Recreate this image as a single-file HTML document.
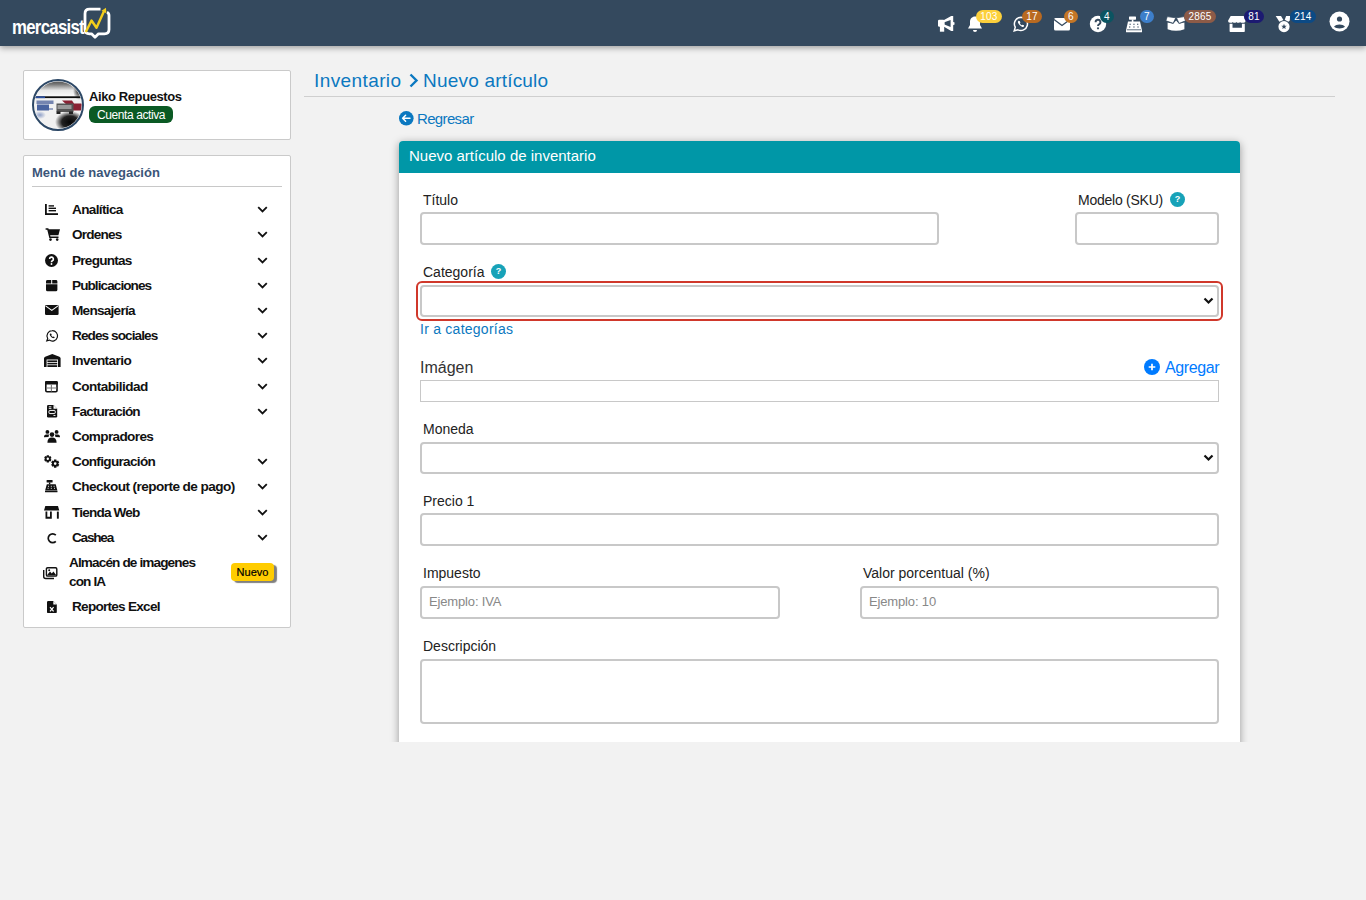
<!DOCTYPE html>
<html><head><meta charset="utf-8">
<style>
*{box-sizing:border-box;margin:0;padding:0}
html,body{width:1366px;height:900px;overflow:hidden;background:#f2f2f2;font-family:"Liberation Sans",sans-serif;color:#212529}
.abs{position:absolute}
#nav{position:absolute;left:0;top:0;width:1366px;height:46px;background:#34495e;box-shadow:0 2px 6px rgba(0,0,0,.35);z-index:5}
.logo-t{position:absolute;left:11px;top:13px;color:#fff;font-weight:bold;font-size:21px;letter-spacing:-1px;line-height:24px}
.nbadge{position:absolute;top:10px;height:13px;border-radius:7px;color:#fff;font-size:10px;line-height:14px;text-align:center;padding:0;letter-spacing:0.2px}
.card{position:absolute;background:#fff;border:1px solid #cacaca;border-radius:2px}
.mi{position:absolute;left:72px;font-weight:bold;font-size:13.6px;line-height:19px;color:#111}
.mic{position:absolute;left:44px;width:15px;height:15px}
.chev{position:absolute;left:257px;width:11px;height:7px}
.lbl{position:absolute;font-size:14px;line-height:16px;color:#222}
.inp{position:absolute;border:2px solid #c8c8c8;border-radius:4px;background:#fff}
.q{position:absolute;width:14px;height:14px;border-radius:50%;background:#17a2b8;color:#fff;font-size:9px;font-weight:bold;line-height:14px;text-align:center}
.ph{position:absolute;left:7px;top:6px;font-size:13px;color:#888;letter-spacing:-0.15px}
</style></head><body>
<div id="nav">
  <div class="logo-t" style="left:12px;top:14px;font-size:21px;line-height:26px;letter-spacing:-0.9px;transform:scaleX(0.8);transform-origin:0 0">mercasist</div>
  <svg class="abs" style="left:80px;top:4px" width="34" height="38" viewBox="80 4 34 38">
    <path d="M100.5 9.2 H89.5 Q85 9.2 85 13.7 V29.5 Q85 33.8 89.5 33.8 H91.5 L95 37.2 L98.5 33.8 H104.5 Q109 33.8 109 29.5 V15.5 Q109 13 107 12.2" fill="none" stroke="#fff" stroke-width="2.8" stroke-linejoin="round"/>
    <path d="M85.8 32 L91.5 20.5 L96.5 27.8 L104.3 10.5" fill="none" stroke="#f3cd1c" stroke-width="2.4" stroke-linejoin="round"/>
    <path d="M101.5 10.8 L106 7.8 L106.3 13.2 Z" fill="#f3cd1c"/>
  </svg>

<svg class="abs" style="left:934px;top:12px" width="24" height="24" viewBox="0 0 24 24"><rect x="4" y="7.7" width="6.4" height="7" rx="1.3" fill="#fff"/><rect x="5.9" y="13" width="4.3" height="6.7" fill="#fff"/><path fill-rule="evenodd" d="M10 7.9 L17.2 4 H19.2 V18.9 H17.2 L10 14.8z M10.4 10.3 L16.6 7.9 V15 L10.4 12.6z" fill="#fff"/><rect x="18.8" y="10" width="1.7" height="3" rx=".8" fill="#fff"/></svg>
<svg class="abs" style="left:967px;top:15px" width="16" height="18" viewBox="0 0 16 18"><path d="M8 1.5c-3 0-5 2.3-5 5.2v3.3L1 13.5h14L13 10V6.7c0-2.9-2-5.2-5-5.2z" fill="#fff"/><path d="M6 15h4a2 2 0 0 1-4 0z" fill="#fff"/></svg>
<div class="nbadge" style="left:976px;width:26px;background:#fcd03c">103</div>
<svg class="abs" style="left:1013px;top:16px" width="16" height="16" viewBox="0 0 16 16"><path d="M8 1.3a6.6 6.6 0 0 0-5.7 9.9L1.2 14.8l3.7-1A6.6 6.6 0 1 0 8 1.3z" stroke="#fff" stroke-width="1.5" fill="none"/><path d="M5.5 4.8c-.5.4-.9 1.3-.2 2.5.8 1.5 2.1 2.8 3.6 3.4 1.1.4 1.8.1 2.2-.4l-.2-1-1.4-.6-.6.6c-.9-.3-1.7-1.2-2.1-2l.6-.6-.5-1.4z" fill="#fff"/></svg>
<div class="nbadge" style="left:1022px;width:20px;background:#b96a21">17</div>
<svg class="abs" style="left:1053px;top:17px" width="18" height="14" viewBox="0 0 18 14"><rect x="1" y="1" width="16" height="12.5" rx="1.5" fill="#fff"/><path d="M1 2.5l8 6 8-6" stroke="#34495e" stroke-width="1.3" fill="none"/></svg>
<div class="nbadge" style="left:1064px;width:14px;padding:0;background:#c47626">6</div>
<svg class="abs" style="left:1089px;top:15px" width="18" height="18" viewBox="0 0 18 18"><circle cx="9" cy="9" r="8.2" fill="#fff"/><path d="M6.6 7.2a2.4 2.4 0 1 1 3.5 2.1c-.8.4-1.1.8-1.1 1.6" stroke="#34495e" stroke-width="1.9" fill="none"/><circle cx="9" cy="13.3" r="1.1" fill="#34495e"/></svg>
<div class="nbadge" style="left:1100px;width:14px;padding:0;background:#0b5461">4</div>
<svg class="abs" style="left:1125px;top:15px" width="18" height="18" viewBox="0 0 18 18"><rect x="4" y="1.5" width="7" height="3.2" rx=".6" fill="#fff"/><rect x="6.8" y="4.5" width="1.6" height="2.5" fill="#fff"/><path d="M3 6.5h12l2 9H1z" fill="#fff"/><rect x="1" y="15" width="16" height="2.3" rx=".5" fill="#fff"/><path d="M4.5 9.2h1.3M8.3 9.2h1.3M12 9.2h1.3M4 12h1.3M8.3 12h1.3M12.4 12h1.3" stroke="#34495e" stroke-width="1.1"/><path d="M2 14.8h14" stroke="#34495e" stroke-width=".8"/></svg>
<div class="nbadge" style="left:1140px;width:14px;padding:0;background:#3d7fcb">7</div>
<svg class="abs" style="left:1162px;top:12px" width="28" height="24" viewBox="0 0 28 24"><path d="M5.6 10.6 L11.2 11.7 L14.1 8.6 L17 11.7 L22.4 10.6 V17.2 Q14 20.4 5.6 17.2z" fill="#fff"/><path d="M5.3 4.6 L13.8 5.8 L11.2 11.3 L3.8 8.8z" fill="#fff" stroke="#34495e" stroke-width=".8" stroke-linejoin="round"/><path d="M14.4 5.8 L22.3 4.6 L23.6 8.8 L17.1 11.4z" fill="#fff" stroke="#34495e" stroke-width=".8" stroke-linejoin="round"/></svg>
<div class="nbadge" style="left:1184px;width:32px;background:#8d5b47">2865</div>
<svg class="abs" style="left:1224px;top:12px" width="24" height="24" viewBox="0 0 24 24"><path d="M6.7 3.9H19.7L21.6 8.7Q21.6 10.7 19.6 10.7H6Q4 10.7 4 8.7z" fill="#fff"/><circle cx="8.7" cy="10.9" r=".7" fill="#34495e"/><circle cx="12.4" cy="10.9" r=".7" fill="#34495e"/><circle cx="16.1" cy="10.9" r=".7" fill="#34495e"/><path fill-rule="evenodd" d="M5.6 11.7H20.8V19.2Q20.8 20 20 20H6.4Q5.6 20 5.6 19.2zM8.5 11.7H17.9V15.7H8.5z" fill="#fff"/></svg>
<div class="nbadge" style="left:1244px;width:20px;background:#1c1a71">81</div>
<svg class="abs" style="left:1272px;top:10px" width="24" height="24" viewBox="0 0 24 24"><path d="M3.7 6.1H9L11.4 10L7.4 11.8z" fill="#fff"/><path d="M14.1 6.1H18.1L17.8 10.4L16.4 11.8L12.7 9.7z" fill="#fff"/><path fill-rule="evenodd" d="M17.6 16.6a5.6 5.6 0 1 1-11.2 0a5.6 5.6 0 1 1 11.2 0zM12.00 13.80 L12.73 15.69 L14.76 15.80 L13.19 17.09 L13.70 19.05 L12.00 17.95 L10.30 19.05 L10.81 17.09 L9.24 15.80 L11.27 15.69z" fill="#fff"/></svg>
<div class="nbadge" style="left:1290px;width:26px;background:#0c4a85">214</div>
<svg class="abs" style="left:1329px;top:11px" width="21" height="21" viewBox="0 0 21 21"><circle cx="10.5" cy="10.5" r="10" fill="#fff"/><circle cx="10.5" cy="8" r="2.6" fill="#34495e"/><path d="M5 15.8c1.2-1.6 3.2-2.4 5.5-2.4s4.3.8 5.5 2.4c-1.4 1.1-3.4 1.6-5.5 1.6s-4.1-.5-5.5-1.6z" fill="#34495e"/></svg>

</div>

<!-- profile card -->
<div class="card" style="left:23px;top:70px;width:268px;height:70px"></div>
<svg class="abs" style="left:32px;top:79px" width="52" height="52" viewBox="0 0 52 52">
 <defs>
  <clipPath id="avc"><circle cx="26" cy="26" r="23.6"/></clipPath>
  <linearGradient id="avt" x1="0" y1="0" x2="0" y2="1"><stop offset="0" stop-color="#3a3a3a"/><stop offset=".3" stop-color="#777"/><stop offset=".65" stop-color="#e8e8e8"/><stop offset="1" stop-color="#fafafa"/></linearGradient>
  <radialGradient id="avb" cx=".5" cy=".5" r=".5"><stop offset="0" stop-color="#050505"/><stop offset=".55" stop-color="#222"/><stop offset="1" stop-color="#222" stop-opacity="0"/></radialGradient>
  <radialGradient id="avr" cx=".5" cy=".5" r=".5"><stop offset="0" stop-color="#111"/><stop offset="1" stop-color="#111" stop-opacity="0"/></radialGradient>
  <radialGradient id="avbl" cx=".5" cy=".5" r=".5"><stop offset="0" stop-color="#8fa0c8"/><stop offset="1" stop-color="#8fa0c8" stop-opacity="0"/></radialGradient>
 </defs>
 <circle cx="26" cy="26" r="25.8" fill="#fff"/>
 <g clip-path="url(#avc)">
  <rect x="0" y="0" width="52" height="52" fill="#f1f1f1"/>
  <rect x="0" y="0" width="52" height="17.5" fill="url(#avt)"/>
  <ellipse cx="47" cy="12" rx="6" ry="9" fill="url(#avr)"/>
  <rect x="0" y="17.3" width="52" height="1.8" fill="#0d0d0d"/>
  <rect x="3" y="17.3" width="10" height="1.8" fill="#2b4f9e"/>
  <rect x="4.5" y="21.5" width="17" height="3.5" fill="#7585b0"/>
  <rect x="5" y="25.5" width="12" height="6" fill="#4a64a0"/>
  <rect x="17" y="29" width="4" height="2" fill="#9aa6c4"/>
  <path d="M30 21.5h10l2 3h8v7h-9z" fill="#8a2233"/>
  <path d="M24.5 24.5h17v8.5h-17z" fill="#555"/>
  <path d="M25.5 26h14v4h-14z" fill="#999"/>
  <rect x="24.5" y="32.5" width="4" height="2.5" fill="#222"/>
  <rect x="37" y="32.5" width="4" height="2.5" fill="#222"/>
  <ellipse cx="38" cy="43" rx="15" ry="11" fill="url(#avb)"/>
  <ellipse cx="8" cy="36" rx="6" ry="4" fill="url(#avbl)"/>
 </g>
 <circle cx="26" cy="26" r="25" fill="none" stroke="#2d4866" stroke-width="2"/>
</svg>
<div class="abs" style="left:89px;top:89px;font-weight:bold;font-size:13px;line-height:15px;color:#111;letter-spacing:-0.4px">Aiko Repuestos</div>
<div class="abs" style="left:89px;top:106px;width:84px;height:17px;border-radius:6px;background:#0b5a24;color:#fff;font-size:12px;line-height:18px;text-align:center;letter-spacing:-0.4px">Cuenta activa</div>

<!-- menu card -->
<div class="card" style="left:23px;top:155px;width:268px;height:473px"></div>
<div class="abs" style="left:32px;top:165px;font-weight:bold;font-size:13px;line-height:16px;color:#3b5578">Menú de navegación</div>
<div class="abs" style="left:32px;top:186px;width:250px;height:1px;background:#c8c8c8"></div>

<div class="mi" style="top:199.5px;letter-spacing:-0.66px">Analítica</div>
<svg class="chev" style="top:205.5px" width="11" height="7" viewBox="0 0 11 7"><path d="M1.2 1.2 5.5 5.5 9.8 1.2" stroke="#111" stroke-width="1.8" fill="none"/></svg>
<div class="mi" style="top:224.5px;letter-spacing:-0.82px">Ordenes</div>
<svg class="chev" style="top:230.5px" width="11" height="7" viewBox="0 0 11 7"><path d="M1.2 1.2 5.5 5.5 9.8 1.2" stroke="#111" stroke-width="1.8" fill="none"/></svg>
<div class="mi" style="top:250.5px;letter-spacing:-0.76px">Preguntas</div>
<svg class="chev" style="top:256.5px" width="11" height="7" viewBox="0 0 11 7"><path d="M1.2 1.2 5.5 5.5 9.8 1.2" stroke="#111" stroke-width="1.8" fill="none"/></svg>
<div class="mi" style="top:275.5px;letter-spacing:-0.94px">Publicaciones</div>
<svg class="chev" style="top:281.5px" width="11" height="7" viewBox="0 0 11 7"><path d="M1.2 1.2 5.5 5.5 9.8 1.2" stroke="#111" stroke-width="1.8" fill="none"/></svg>
<div class="mi" style="top:300.5px;letter-spacing:-0.75px">Mensajería</div>
<svg class="chev" style="top:306.5px" width="11" height="7" viewBox="0 0 11 7"><path d="M1.2 1.2 5.5 5.5 9.8 1.2" stroke="#111" stroke-width="1.8" fill="none"/></svg>
<div class="mi" style="top:325.5px;letter-spacing:-0.92px">Redes sociales</div>
<svg class="chev" style="top:331.5px" width="11" height="7" viewBox="0 0 11 7"><path d="M1.2 1.2 5.5 5.5 9.8 1.2" stroke="#111" stroke-width="1.8" fill="none"/></svg>
<div class="mi" style="top:350.5px;letter-spacing:-0.58px">Inventario</div>
<svg class="chev" style="top:356.5px" width="11" height="7" viewBox="0 0 11 7"><path d="M1.2 1.2 5.5 5.5 9.8 1.2" stroke="#111" stroke-width="1.8" fill="none"/></svg>
<div class="mi" style="top:376.5px;letter-spacing:-0.54px">Contabilidad</div>
<svg class="chev" style="top:382.5px" width="11" height="7" viewBox="0 0 11 7"><path d="M1.2 1.2 5.5 5.5 9.8 1.2" stroke="#111" stroke-width="1.8" fill="none"/></svg>
<div class="mi" style="top:401.5px;letter-spacing:-0.84px">Facturación</div>
<svg class="chev" style="top:407.5px" width="11" height="7" viewBox="0 0 11 7"><path d="M1.2 1.2 5.5 5.5 9.8 1.2" stroke="#111" stroke-width="1.8" fill="none"/></svg>
<div class="mi" style="top:426.5px;letter-spacing:-0.65px">Compradores</div>
<div class="mi" style="top:451.5px;letter-spacing:-0.69px">Configuración</div>
<svg class="chev" style="top:457.5px" width="11" height="7" viewBox="0 0 11 7"><path d="M1.2 1.2 5.5 5.5 9.8 1.2" stroke="#111" stroke-width="1.8" fill="none"/></svg>
<div class="mi" style="top:476.5px;letter-spacing:-0.57px">Checkout (reporte de pago)</div>
<svg class="chev" style="top:482.5px" width="11" height="7" viewBox="0 0 11 7"><path d="M1.2 1.2 5.5 5.5 9.8 1.2" stroke="#111" stroke-width="1.8" fill="none"/></svg>
<div class="mi" style="top:502.5px;letter-spacing:-0.82px">Tienda Web</div>
<svg class="chev" style="top:508.5px" width="11" height="7" viewBox="0 0 11 7"><path d="M1.2 1.2 5.5 5.5 9.8 1.2" stroke="#111" stroke-width="1.8" fill="none"/></svg>
<div class="mi" style="top:527.5px;letter-spacing:-1.22px">Cashea</div>
<svg class="chev" style="top:533.5px" width="11" height="7" viewBox="0 0 11 7"><path d="M1.2 1.2 5.5 5.5 9.8 1.2" stroke="#111" stroke-width="1.8" fill="none"/></svg>
<div class="mi" style="top:596.5px;letter-spacing:-0.75px">Reportes Excel</div>
<div class="mi" style="left:69px;top:552.5px;letter-spacing:-0.88px">Almacén de imagenes<br>con IA</div>
<div class="abs" style="left:231px;top:563px;width:43px;height:18px;border-radius:4px;background:#ffcc00;box-shadow:3px 2px 1px rgba(0,0,0,.5);color:#000;font-size:11px;line-height:18px;text-align:center;-webkit-text-stroke:0.2px #000">Nuevo</div>

<svg class="abs" style="left:45px;top:204px;overflow:visible" width="13" height="11" viewBox="0 0 13 11"><rect x="0" y="0" width="1.8" height="11" fill="#111"/><rect x="0" y="9.2" width="13" height="1.8" fill="#111"/><rect x="3.6" y="1.2" width="5.4" height="1.4" fill="#111"/><rect x="3.6" y="3.6" width="7.4" height="1.4" fill="#111"/><rect x="3.6" y="6" width="7.4" height="1.4" fill="#111"/></svg>
<svg class="abs" style="left:44.5px;top:228px;overflow:visible" width="15" height="13" viewBox="0 0 15 13"><path d="M0.6 0.9h2.2l2.1 8.3h8.6" stroke="#111" stroke-width="1.5" fill="none"/><path d="M3 1.2h12l-1.6 6H4.5z" fill="#111"/><circle cx="5.5" cy="11.6" r="1.3" fill="#111"/><circle cx="12.2" cy="11.6" r="1.3" fill="#111"/></svg>
<svg class="abs" style="left:45px;top:254px;overflow:visible" width="13" height="13" viewBox="0 0 13 13"><circle cx="6.5" cy="6.5" r="6.5" fill="#111"/><path d="M4.6 5a1.9 1.9 0 1 1 2.8 1.7c-.7.3-.9.7-.9 1.3v.3" stroke="#fff" stroke-width="1.6" fill="none"/><circle cx="6.5" cy="10" r=".95" fill="#fff"/></svg>
<svg class="abs" style="left:45.8px;top:279.8px;overflow:visible" width="11.4" height="11.2" viewBox="0 0 11.4 11.2"><path d="M1.5 0h3.7v3.4H0v-1.9Q0 0 1.5 0zM6.2 0h3.7Q11.4 0 11.4 1.5v1.9H6.2z" fill="#111"/><path d="M0 4.3h11.4v5.4q0 1.5-1.5 1.5H1.5Q0 11.2 0 9.7z" fill="#111"/></svg>
<svg class="abs" style="left:44.5px;top:305px;overflow:visible" width="13.6" height="10" viewBox="0 0 13.6 10"><rect x="0" y="0" width="13.6" height="10" rx="1.2" fill="#111"/><path d="M0.6 0.9 6.8 5.4 13 0.9" stroke="#fff" stroke-width="1.1" fill="none"/></svg>
<svg class="abs" style="left:45.5px;top:329.8px;overflow:visible" width="12" height="11.4" viewBox="0 0 12 11.4"><path d="M6.2 0.7a5.2 5.2 0 0 0-4.5 7.8L0.8 10.8l2.5-.7A5.2 5.2 0 1 0 6.2 0.7z" stroke="#111" stroke-width="1.2" fill="none"/><path d="M4.2 3.4c-.4.3-.7 1-.1 2 .6 1.1 1.6 2.1 2.8 2.6.8.3 1.4.1 1.7-.3l-.1-.8-1.1-.5-.5.5c-.7-.3-1.3-.9-1.7-1.6l.5-.5-.4-1.1z" fill="#111"/></svg>
<svg class="abs" style="left:43.7px;top:354px;overflow:visible" width="16.6" height="13" viewBox="0 0 16.6 13"><path d="M0 4.3Q0 3.2 1.2 2.7L8.3 0l7.1 2.7q1.2.5 1.2 1.6V13h-2.6V5.6H2.6V13H0z" fill="#111"/><rect x="3.4" y="6.4" width="9.8" height="1.6" fill="#111"/><rect x="3.4" y="8.8" width="9.8" height="1.6" fill="#111"/><rect x="3.4" y="11.2" width="9.8" height="1.8" fill="#111"/></svg>
<svg class="abs" style="left:44.8px;top:380.5px;overflow:visible" width="12.8" height="11.5" viewBox="0 0 12.8 11.5"><rect x="0.8" y="0.8" width="11.2" height="9.9" rx="1.2" fill="none" stroke="#111" stroke-width="1.6"/><rect x="0" y="0" width="12.8" height="3.6" rx="1.2" fill="#111"/><path d="M1 7h10.8M6.4 3.6v7" stroke="#777" stroke-width="1.1"/></svg>
<svg class="abs" style="left:46.9px;top:404.8px;overflow:visible" width="10.2" height="12.5" viewBox="0 0 10.2 12.5"><path d="M0 1.2Q0 0 1.2 0h5.3l3.7 3.7v7.6q0 1.2-1.2 1.2H1.2Q0 12.5 0 11.3z" fill="#111"/><path d="M6.5 0v3.7h3.7z" fill="#fff"/><path d="M1.8 1.8h2.6M1.8 3.4h2.6M6.5 10.5h2" stroke="#fff" stroke-width=".9"/><rect x="2" y="5.4" width="6.2" height="3.2" rx=".8" fill="none" stroke="#fff" stroke-width="1"/></svg>
<svg class="abs" style="left:44.1px;top:429.9px;overflow:visible" width="16" height="12.8" viewBox="0 0 16 12.8"><circle cx="3.4" cy="1.9" r="1.9" fill="#111"/><circle cx="12.6" cy="1.9" r="1.9" fill="#111"/><circle cx="8" cy="4.6" r="2.3" fill="#111"/><path d="M0 7.2Q0 4.6 2.3 4.6h2.2q.4 0 .7.2-.6.8-.6 2.3z" fill="#111"/><path d="M16 7.2Q16 4.6 13.7 4.6h-2.2q-.4 0-.7.2.6.8.6 2.3z" fill="#111"/><path d="M3.4 12.8q0-5.2 4.6-5.2t4.6 5.2z" fill="#111"/></svg>
<svg class="abs" style="left:44.1px;top:454.9px;overflow:visible" width="15.6" height="12.8" viewBox="0 0 15.6 12.8"><path fill-rule="evenodd" d="M2.72 0.16 L4.88 0.16 L4.98 1.15 L5.50 1.45 L6.42 1.04 L7.50 2.91 L6.68 3.50 L6.68 4.10 L7.50 4.69 L6.42 6.56 L5.50 6.15 L4.98 6.45 L4.88 7.44 L2.72 7.44 L2.62 6.45 L2.10 6.15 L1.18 6.56 L0.10 4.69 L0.92 4.10 L0.92 3.50 L0.10 2.91 L1.18 1.04 L2.10 1.45 L2.62 1.15ZM5.00 3.80a1.2 1.2 0 1 0 -2.40 0a1.2 1.2 0 1 0 2.40 0z" fill="#111"/><path fill-rule="evenodd" d="M10.01 4.57 L12.39 4.57 L12.50 5.68 L13.08 6.01 L14.09 5.55 L15.28 7.62 L14.38 8.27 L14.38 8.93 L15.28 9.58 L14.09 11.65 L13.08 11.19 L12.50 11.52 L12.39 12.63 L10.01 12.63 L9.90 11.52 L9.32 11.19 L8.31 11.65 L7.12 9.58 L8.02 8.93 L8.02 8.27 L7.12 7.62 L8.31 5.55 L9.32 6.01 L9.90 5.68ZM12.55 8.60a1.35 1.35 0 1 0 -2.70 0a1.35 1.35 0 1 0 2.70 0z" fill="#111"/></svg>
<svg class="abs" style="left:45.1px;top:479.5px;overflow:visible" width="12.5" height="12.2" viewBox="0 0 12.5 12.2"><rect x="1.6" y="0" width="6" height="2.6" rx=".6" fill="#111"/><rect x="3.9" y="2.4" width="1.4" height="2" fill="#111"/><path d="M1.8 4.3h8.9l1.6 6H0.2z" fill="#111"/><rect x="0" y="10.6" width="12.5" height="1.6" rx=".5" fill="#111"/><path d="M3 6.3h1M5.8 6.3h1M8.6 6.3h1M2.6 8.3h1M5.8 8.3h1M9 8.3h1" stroke="#fff" stroke-width=".9"/></svg>
<svg class="abs" style="left:44px;top:506px;overflow:visible" width="15.3" height="12.7" viewBox="0 0 15.3 12.7"><path d="M1.3 0h12.7l1.3 4.6H0z" fill="#111"/><path d="M1.5 5.6v7.1h6.3V5.6H6v5.1H3.3V5.6z" fill="#111"/><rect x="12.9" y="5.6" width="1.9" height="7.1" fill="#111"/></svg>
<svg class="abs" style="left:46.5px;top:532.5px;overflow:visible" width="10" height="10.5" viewBox="0 0 10 10.5"><path d="M8.8 2.2A4.4 4.4 0 1 0 8.8 8.3" stroke="#111" stroke-width="1.7" fill="none"/></svg>
<svg class="abs" style="left:43px;top:566.5px;overflow:visible" width="14.5" height="11.7" viewBox="0 0 14.5 11.7"><rect x="3.4" y="0.7" width="10.4" height="8.4" rx="1.2" fill="none" stroke="#111" stroke-width="1.4"/><path d="M3.8 8.6l3.2-4 1.8 1.8 1.6-2 3.1 4.2z" fill="#111"/><circle cx="6.2" cy="3.2" r="1" fill="#111"/><path d="M0.7 3v6.5q0 2 2 2h8.3" stroke="#111" stroke-width="1.4" fill="none"/></svg>
<svg class="abs" style="left:47px;top:600.6px;overflow:visible" width="9.8" height="12.1" viewBox="0 0 9.8 12.1"><path d="M0 1.2Q0 0 1.2 0h5.1l3.5 3.5v7.4q0 1.2-1.2 1.2H1.2Q0 12.1 0 10.9z" fill="#111"/><path d="M6.3 0v3.5h3.5z" fill="#fff"/><path d="M3 6.2l3.6 4.2M6.6 6.2 3 10.4" stroke="#fff" stroke-width="1.2"/></svg>

<!-- breadcrumb -->
<div class="abs" style="left:314px;top:70px;font-size:19px;color:#0b78c0;line-height:22px;letter-spacing:0.4px">Inventario</div>
<svg class="abs" style="left:408px;top:73px" width="11" height="15" viewBox="0 0 11 15"><path d="M2.5 1.5 8.5 7.5 2.5 13.5" stroke="#0b78c0" stroke-width="2.4" fill="none"/></svg>
<div class="abs" style="left:423px;top:70px;font-size:19px;color:#0b78c0;line-height:22px;letter-spacing:0.2px">Nuevo artículo</div>
<div class="abs" style="left:304px;top:96px;width:1031px;height:1px;background:#cfcfcf"></div>
<svg class="abs" style="left:399px;top:111.2px" width="14.6" height="14.6" viewBox="0 0 14.6 14.6"><circle cx="7.3" cy="7.3" r="7.3" fill="#0b78c0"/><path d="M11 7.3H3.6M6.6 4.3 3.6 7.3 6.6 10.3" stroke="#fff" stroke-width="1.5" fill="none" stroke-linecap="round" stroke-linejoin="round"/></svg>
<div class="abs" style="left:417px;top:110px;font-size:15px;color:#0b78c0;line-height:17px;letter-spacing:-0.65px">Regresar</div>

<!-- main card -->
<div class="abs" style="left:370px;top:120px;width:900px;height:622px;overflow:hidden"><div class="abs" style="left:29px;top:21px;width:841px;height:700px;background:#fff;border-radius:4px 4px 0 0;box-shadow:0 2px 9px rgba(0,0,0,.38)"></div></div>
<div class="abs" style="left:399px;top:141px;width:841px;height:32px;background:#0097a7;border-radius:4px 4px 0 0"></div>
<div class="abs" style="left:409px;top:147px;font-size:15px;color:#fff;line-height:17px">Nuevo artículo de inventario</div>

<div class="lbl" style="left:423px;top:192px">Título</div>
<div class="inp" style="left:420px;top:212px;width:519px;height:33px"></div>
<div class="lbl" style="left:1078px;top:192px;letter-spacing:-0.25px">Modelo (SKU)</div>
<div class="q" style="left:1170px;top:192px;width:15px;height:15px;line-height:15px">?</div>
<div class="inp" style="left:1075px;top:212px;width:144px;height:33px"></div>

<div class="lbl" style="left:423px;top:264px">Categoría</div>
<div class="q" style="left:491px;top:264px;width:15px;height:15px;line-height:15px">?</div>
<div class="abs" style="left:416px;top:281px;width:807px;height:40px;border:2px solid #d0382b;border-radius:6px"></div>
<div class="inp" style="left:420px;top:285px;width:799px;height:32px"></div>
<svg class="abs" style="left:1203px;top:297px" width="11" height="8" viewBox="0 0 11 8"><path d="M1.5 1.5 5.5 5.5 9.5 1.5" stroke="#111" stroke-width="2.2" fill="none"/></svg>
<div class="abs" style="left:420px;top:321px;font-size:14px;color:#0b78c0;letter-spacing:0.25px">Ir a categorías</div>

<div class="abs" style="left:420px;top:359px;font-size:16px;color:#333">Imágen</div>
<svg class="abs" style="left:1144px;top:359px" width="16" height="16" viewBox="0 0 16 16"><circle cx="8" cy="8" r="8" fill="#007bff"/><path d="M8 4.7v6.6M4.7 8h6.6" stroke="#fff" stroke-width="1.7"/></svg>
<div class="abs" style="left:1165px;top:359px;font-size:16px;color:#007bff;letter-spacing:-0.4px">Agregar</div>
<div class="abs" style="left:420px;top:380px;width:799px;height:22px;border:1px solid #c8c8c8"></div>

<div class="lbl" style="left:423px;top:421px">Moneda</div>
<div class="inp" style="left:420px;top:442px;width:799px;height:32px"></div>
<svg class="abs" style="left:1203px;top:454px" width="11" height="8" viewBox="0 0 11 8"><path d="M1.5 1.5 5.5 5.5 9.5 1.5" stroke="#111" stroke-width="2.2" fill="none"/></svg>

<div class="lbl" style="left:423px;top:493px">Precio 1</div>
<div class="inp" style="left:420px;top:513px;width:799px;height:33px"></div>

<div class="lbl" style="left:423px;top:565px">Impuesto</div>
<div class="inp" style="left:420px;top:586px;width:360px;height:33px"><div class="ph">Ejemplo: IVA</div></div>
<div class="lbl" style="left:863px;top:565px">Valor porcentual (%)</div>
<div class="inp" style="left:860px;top:586px;width:359px;height:33px"><div class="ph">Ejemplo: 10</div></div>

<div class="lbl" style="left:423px;top:638px">Descripción</div>
<div class="inp" style="left:420px;top:659px;width:799px;height:65px"></div>

</body></html>
